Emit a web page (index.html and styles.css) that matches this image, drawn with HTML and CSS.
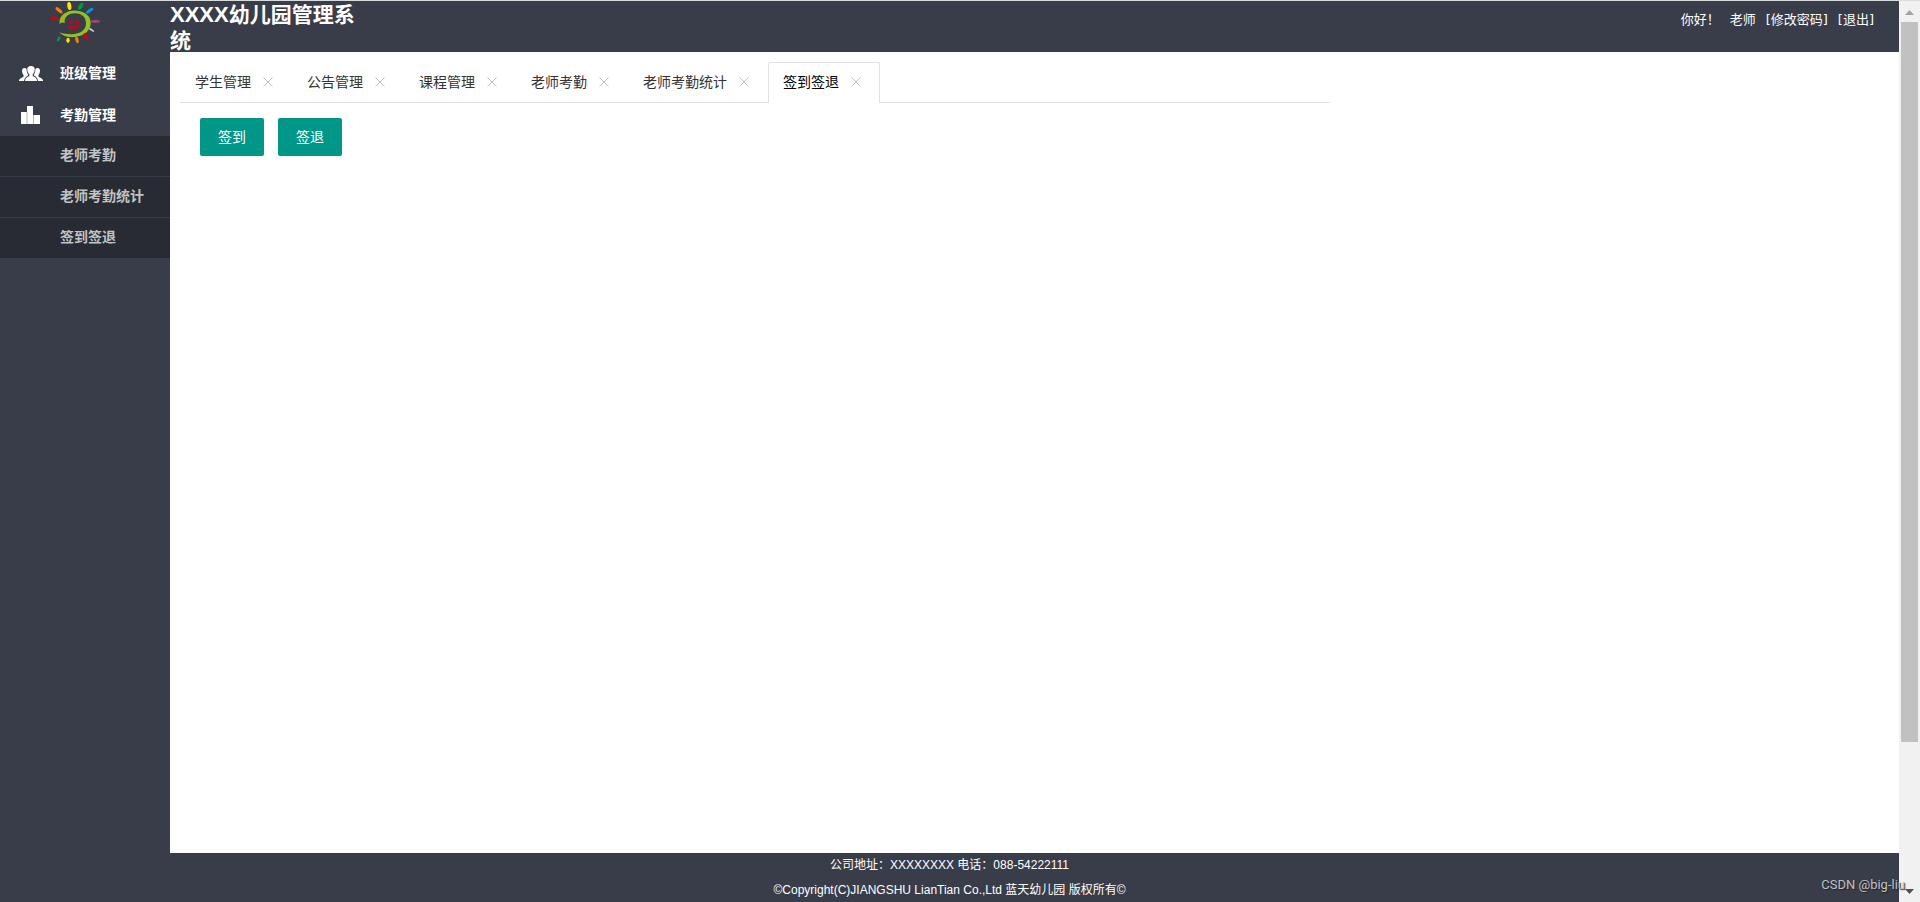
FILE: index.html
```html
<!DOCTYPE html>
<html lang="zh-CN">
<head>
<meta charset="utf-8">
<title>XXXX幼儿园管理系统</title>
<link rel="stylesheet" href="styles.css">
</head>
<body>
<div class="page">
  <div class="layout">
    <header class="header">
      <div class="logo">
        <svg width="70" height="51" viewBox="0 3 210 153" role="img" aria-label="蓝天幼儿园">
          <path d="M59 73C54 44 84 30 110 32C139 35 154 51 152 72C149 101 120 113 88 111C76 110 66 105 57 97C75 103 91 104 103 102C125 99 138 88 138 70C138 51 126 41 106 40C86 40 71 50 74 70C68 66 63 67 59 73Z" fill="#95c11f"/>
          <g fill="#d7000f">
            <circle cx="93" cy="65" r="5"/>
            <circle cx="112" cy="65" r="5"/>
            <path d="M81 76Q101 84 120 73Q116 87 101 87Q88 87 81 76Z"/>
            <ellipse cx="43" cy="55" rx="14" ry="5" transform="rotate(4 43 55)"/>
            <ellipse cx="138" cy="109" rx="5" ry="11" transform="rotate(-32 138 109)"/>
          </g>
          <ellipse cx="57" cy="31" rx="5" ry="13" transform="rotate(-49 57 31)" fill="#ef8200"/>
          <ellipse cx="88" cy="18" rx="6" ry="12" transform="rotate(-8 88 18)" fill="#ffe600"/>
          <ellipse cx="122" cy="19" rx="6" ry="12" transform="rotate(30 122 19)" fill="#009a3e"/>
          <ellipse cx="149" cy="32" rx="5" ry="13" transform="rotate(54 149 32)" fill="#0096e8"/>
          <ellipse cx="166" cy="64" rx="14" ry="5" fill="#9b4676"/>
          <ellipse cx="155" cy="90" rx="3" ry="9" transform="rotate(-58 155 90)" fill="#d5c3e0"/>
          <ellipse cx="56" cy="117" rx="4" ry="8" transform="rotate(30 56 117)" fill="#009a3e"/>
          <ellipse cx="84" cy="121" rx="5" ry="8" fill="#ffe600"/>
          <ellipse cx="111" cy="120" rx="5" ry="10" transform="rotate(-12 111 120)" fill="#ef8200"/>
        </svg>
      </div>
      <h1 class="title"><span class="title-latin">XXXX</span>幼儿园管理系统</h1>
      <div class="user">
        <span>你好！</span>
        <span>老师</span>
        <a href="#password">[修改密码]</a>
        <a href="#logout">[退出]</a>
      </div>
    </header>

    <nav class="sidebar">
      <a class="menu-item" href="#class">
        <svg class="menu-icon" width="24" height="18" viewBox="0 0 24 18" fill="#fff">
          <path d="M0 17V16Q1 14 4.500 12.700V11Q3 9 3 7Q3 4 5.500 4Q7 4 7.500 5Q7.500 9 9 10.500V11.500Q5.500 13 5 17Z"/>
          <path d="M24 17V16Q23 14 19.500 12.700V11Q21 9 21 7Q21 4 18.500 4Q17 4 16.500 5Q16.500 9 15 10.500V11.500Q18.500 13 19 17Z"/>
          <path d="M6 17Q6 13.500 10.300 12V10.500Q8.200 8.500 8.200 5.500Q8.200 2 12 2Q15.800 2 15.800 5.500Q15.800 8.500 13.700 10.500V12Q18 13.500 18 17Z"/>
        </svg>
        <span>班级管理</span>
      </a>
      <a class="menu-item" href="#attendance">
        <svg class="menu-icon" width="24" height="18" viewBox="0 0 24 18">
          <path d="M2 6H8V18H2ZM8 0H14V18H8ZM15 9H21V18H15Z" fill="#fff"/>
          <path d="M8 6V18M14.500 9V18" stroke="#b5b7bc"/>
        </svg>
        <span>考勤管理</span>
      </a>
      <div class="submenu">
        <a href="#teacher">老师考勤</a>
        <a href="#stats">老师考勤统计</a>
        <a href="#sign">签到签退</a>
      </div>
    </nav>

    <main class="content">
      <div class="tabs">
        <div class="tab"><span>学生管理</span><button class="close" aria-label="关闭学生管理"><svg viewBox="0 0 10 10"><path d="M0.500 0.500L9.500 9.500M9.500 0.500L0.500 9.500"/></svg></button></div>
        <div class="tab"><span>公告管理</span><button class="close" aria-label="关闭公告管理"><svg viewBox="0 0 10 10"><path d="M0.500 0.500L9.500 9.500M9.500 0.500L0.500 9.500"/></svg></button></div>
        <div class="tab"><span>课程管理</span><button class="close" aria-label="关闭课程管理"><svg viewBox="0 0 10 10"><path d="M0.500 0.500L9.500 9.500M9.500 0.500L0.500 9.500"/></svg></button></div>
        <div class="tab"><span>老师考勤</span><button class="close" aria-label="关闭老师考勤"><svg viewBox="0 0 10 10"><path d="M0.500 0.500L9.500 9.500M9.500 0.500L0.500 9.500"/></svg></button></div>
        <div class="tab"><span>老师考勤统计</span><button class="close" aria-label="关闭老师考勤统计"><svg viewBox="0 0 10 10"><path d="M0.500 0.500L9.500 9.500M9.500 0.500L0.500 9.500"/></svg></button></div>
        <div class="tab active"><span>签到签退</span><button class="close" aria-label="关闭签到签退"><svg viewBox="0 0 10 10"><path d="M0.500 0.500L9.500 9.500M9.500 0.500L0.500 9.500"/></svg></button></div>
      </div>
      <div class="actions">
        <button class="btn">签到</button>
        <button class="btn">签退</button>
      </div>
    </main>

    <footer class="footer">
      <p>公司地址：XXXXXXXX 电话：088-54222111</p>
      <p>©Copyright(C)JIANGSHU LianTian Co.,Ltd 蓝天幼儿园 版权所有©</p>
    </footer>
  </div>
  <div class="scrollbar">
    <svg width="21" height="21" viewBox="0 0 21 21"><path d="M6 14L10.500 9L15 14Z" fill="#a3a3a3"/></svg>
    <div class="track"><div class="thumb"></div></div>
    <svg width="21" height="21" viewBox="0 0 21 21"><path d="M6 8L10.500 13L15 8Z" fill="#505050"/></svg>
  </div>
  <span class="watermark">CSDN @big-liu</span>
</div>
</body>
</html>
```
FILE: styles.css
```css
* {
  box-sizing: border-box;
}

body {
  margin: 0;
  font: 14px/24px "Liberation Sans", "Noto Sans CJK SC", sans-serif;
  color: #333;
}

a {
  color: inherit;
  text-decoration: none;
}

button {
  font: inherit;
  border: 0;
  cursor: pointer;
}

.page {
  position: relative;
  display: flex;
  min-height: 100vh;
  border-top: 1px solid #d8dcdc;
}

.layout {
  flex: 1;
  display: grid;
  grid-template: 51px 1fr auto / 170px 1fr;
}

.header {
  grid-column: 1 / -1;
  display: flex;
  background: #393d49;
  color: #fff;
}

.logo {
  width: 170px;
  padding-left: 40px;
}

.logo svg {
  display: block;
}

.title {
  width: 190px;
  margin: 0;
  padding-top: 1px;
  font-size: 21px;
  line-height: 26px;
}

.title-latin {
  font-size: 22px;
}

.user {
  display: flex;
  gap: 10px;
  margin-left: auto;
  padding: 7px 25px 0 0;
  font-family: "DejaVu Sans", "Noto Sans CJK SC", sans-serif;
  font-size: 13px;
}

.sidebar {
  background: #393d49;
  color: #fff;
  font-weight: bold;
}

.menu-item {
  display: flex;
  align-items: center;
  gap: 17px;
  height: 42px;
  padding-left: 19px;
}

.submenu {
  display: grid;
  gap: 1px;
  color: #c2c3c5;
}

.submenu a {
  padding: 0 0 2px 60px;
  background: #282b33;
  line-height: 38px;
}

.content {
  padding: 10px;
}

.tabs {
  display: flex;
  width: 67.3%;
  height: 41px;
  border-bottom: 1px solid #e2e2e2;
}

.tab {
  display: flex;
  align-items: center;
  gap: 8px;
  height: 40px;
  padding: 0 15px;
}

.tab.active {
  height: 41px;
  padding: 0 14px 2px;
  border: 1px solid #e2e2e2;
  border-bottom: 0;
  border-radius: 2px 2px 0 0;
  background: #fff;
  color: #000;
}

.close {
  display: grid;
  place-items: center;
  width: 18px;
  height: 18px;
  padding: 0;
  background: none;
}

.close svg {
  width: 10px;
  height: 10px;
  stroke: #c2c2c2;
}

.actions {
  display: flex;
  gap: 14px;
  padding: 15px 20px;
}

.btn {
  height: 38px;
  padding: 0 18px;
  border-radius: 2px;
  background: #009688;
  color: #fff;
}

.footer {
  grid-column: 1 / -1;
  height: 49px;
  background: #393d49;
  color: #fff;
  font-size: 12px;
  line-height: 25px;
  text-align: center;
}

.footer p {
  margin: 0;
}

.scrollbar {
  display: flex;
  flex-direction: column;
  width: 21px;
  background: #f1f1f1;
}

.track {
  flex: 1;
  padding: 0 2px;
}

.thumb {
  height: 83.8%;
  background: #c1c1c1;
}

.watermark {
  position: absolute;
  right: 15px;
  bottom: 5px;
  color: #c0c1c4;
  font-family: Roboto, sans-serif;
  font-size: 13px;
  text-shadow: 1px 1px 1px #222;
}
```
